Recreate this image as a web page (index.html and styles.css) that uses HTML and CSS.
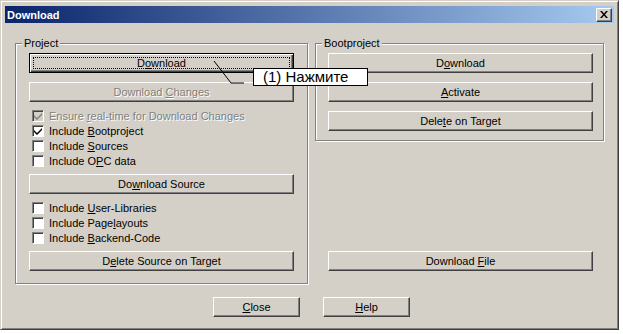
FILE: index.html
```html
<!DOCTYPE html>
<html>
<head>
<meta charset="utf-8">
<link rel="stylesheet" href="styles.css">
</head>
<body>
<div class="window">
  <div class="titlebar">
    <span class="title">Download</span>
    <span class="xbtn"><svg width="8" height="7" viewBox="0 0 8 7"><path d="M0 0h2l2 2.5 2-2.5h2l-3 3.5 3 3.5h-2l-2-2.5-2 2.5h-2l3-3.5z" fill="#000"/></svg></span>
  </div>
  <div class="content">
    <div class="groups">
      <fieldset class="group project">
        <legend>Project</legend>
        <div class="btn default"><span>D<u>o</u>wnload</span></div>
        <div class="btn disabled gap9"><span>Download <u>C</u>hanges</span></div>
        <div class="checks">
          <div class="row disabled"><span class="cb cb-dis"><svg width="8" height="8" viewBox="0 0 8 8"><path d="M0 3l3 3 5-5v2l-5 5-3-3z" fill="#808080"/></svg></span><span>Ensure <u>r</u>eal-time for Download Changes</span></div>
          <div class="row"><span class="cb"><svg width="8" height="8" viewBox="0 0 8 8"><path d="M0 3l3 3 5-5v2l-5 5-3-3z" fill="#000"/></svg></span><span>Include <u>B</u>ootproject</span></div>
          <div class="row"><span class="cb"></span><span>Include <u>S</u>ources</span></div>
          <div class="row"><span class="cb"></span><span>Include O<u>P</u>C data</span></div>
        </div>
        <div class="btn"><span>Do<u>w</u>nload Source</span></div>
        <div class="checks">
          <div class="row"><span class="cb"></span><span>Include <u>U</u>ser-Libraries</span></div>
          <div class="row"><span class="cb"></span><span>Include Page<u>l</u>ayouts</span></div>
          <div class="row"><span class="cb"></span><span>Include <u>B</u>ackend-Code</span></div>
        </div>
        <div class="btn"><span>D<u>e</u>lete Source on Target</span></div>
      </fieldset>
      <div class="rightcol">
        <fieldset class="group boot">
          <legend>Bootproject</legend>
          <div class="btn"><span>D<u>o</u>wnload</span></div>
          <div class="btn gap9"><span><u>A</u>ctivate</span></div>
          <div class="btn gap9"><span>Dele<u>t</u>e on Target</span></div>
        </fieldset>
        <div class="btn filebtn"><span>Download <u>F</u>ile</span></div>
      </div>
    </div>
    <div class="footer">
      <div class="btn small"><span><u>C</u>lose</span></div>
      <div class="btn small"><span><u>H</u>elp</span></div>
    </div>
  </div>
  <svg class="leader" width="260" height="100" viewBox="0 0 260 100"><polyline points="213,60 230,82 243,82" fill="none" stroke="#000" stroke-width="1"/></svg>
  <div class="callout">(1) Нажмите</div>
</div>
</body>
</html>
```
FILE: styles.css
```css
html, body {
  margin: 0;
  padding: 0;
  background: #ffffff;
}
body {
  font-family: "Liberation Sans", Arial, sans-serif;
  font-size: 11px;
  color: #000;
}
.window {
  position: relative;
  width: 619px;
  height: 330px;
  box-sizing: border-box;
  background: #d4d0c8;
  border: 1px solid;
  border-color: #d4d0c8 #404040 #404040 #d4d0c8;
  box-shadow: inset 1px 1px #ffffff, inset -1px -1px #808080;
  padding: 5px 4px 3px 4px;
}
.titlebar {
  height: 17px;
  display: flex;
  align-items: center;
  justify-content: space-between;
  padding: 0 2px 0 2px;
  background: linear-gradient(to right, #0a246a, #a6caf0);
}
.title {
  color: #fff;
  font-weight: bold;
  font-size: 11px;
}
.xbtn {
  width: 16px;
  height: 14px;
  box-sizing: border-box;
  background: #d4d0c8;
  border: 1px solid;
  border-color: #fff #404040 #404040 #fff;
  box-shadow: inset -1px -1px #808080;
  display: flex;
  align-items: center;
  justify-content: center;
}
.content {
  padding: 14px 6px 0 10px;
}
.groups {
  display: grid;
  grid-template-columns: 293px 289px;
  column-gap: 7px;
}
.group {
  margin: 0;
  min-width: 0;
  border: 1px solid #808080;
  box-shadow: inset 1px 1px #fff, 1px 1px #fff;
  display: flex;
  flex-direction: column;
}
.group legend {
  padding: 0 2px;
  line-height: 13px;
  background: #d4d0c8;
}
.project legend {
  margin-left: -7px;
}
.boot legend {
  margin-left: -6px;
}
.project {
  padding: 3px 13px 12px 13px;
}
.boot {
  padding: 3px 10px 9px 12px;
}
.rightcol {
  display: flex;
  flex-direction: column;
}
.btn {
  position: relative;
  height: 20px;
  box-sizing: border-box;
  border: 1px solid;
  border-color: #fff #404040 #404040 #fff;
  box-shadow: inset -1px -1px #808080;
  display: flex;
  align-items: center;
  justify-content: center;
  background: #d4d0c8;
  white-space: pre;
}
.btn.default {
  border: 1px solid #000;
  box-shadow: inset 1px 1px #fff, inset -1px -1px #404040, inset -2px -2px #808080;
}
.btn.default::after {
  content: "";
  position: absolute;
  left: 3px;
  top: 3px;
  right: 3px;
  bottom: 3px;
  border: 1px dotted #000;
}
.btn.disabled, .row.disabled {
  color: #808080;
  text-shadow: 1px 1px #fff;
}
.gap9 {
  margin-top: 9px;
}
.checks {
  margin: 6px 0 6px 0;
}
.row {
  height: 15px;
  display: flex;
  align-items: center;
  padding-left: 3px;
}
.cb {
  width: 12px;
  height: 12px;
  box-sizing: border-box;
  background: #fff;
  border: 1px solid;
  border-color: #808080 #fff #fff #808080;
  box-shadow: inset 1px 1px #404040;
  margin-right: 5px;
  display: flex;
  align-items: center;
  justify-content: center;
}
.cb-dis {
  background: #d4d0c8;
}
.filebtn {
  margin-top: auto;
  margin-left: 13px;
  width: 265px;
  margin-bottom: 13px;
}
.footer {
  display: flex;
  justify-content: center;
  gap: 23px;
  margin-top: 13px;
}
.btn.small {
  width: 87px;
}
.leader {
  position: absolute;
  left: 0;
  top: 0;
  pointer-events: none;
}
.callout {
  position: absolute;
  left: 252px;
  top: 67px;
  width: 115px;
  height: 18px;
  box-sizing: border-box;
  background: #fff;
  border: 1px solid #000;
  font-size: 15px;
  line-height: 16px;
  padding-left: 9px;
}
```
